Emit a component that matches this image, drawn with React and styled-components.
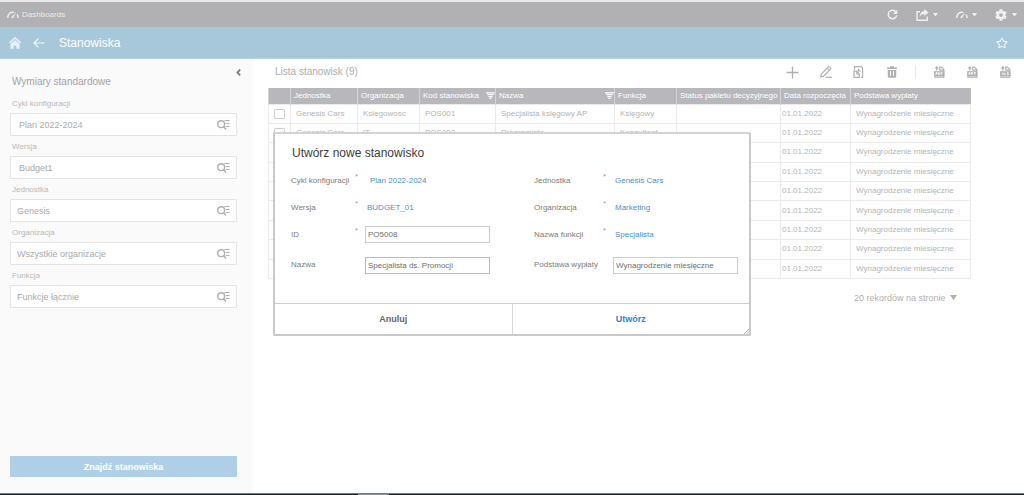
import React, { useState } from "react";
import styled, { createGlobalStyle } from "styled-components";
import { FaCog, FaRegStar } from "react-icons/fa";

const GlobalStyle = createGlobalStyle`
  * {
    box-sizing: border-box;
  }
  body {
    margin: 0;
    background-color: #fff;
    font-family: "Liberation Sans", Arial, sans-serif;
    font-size: 8px;
    color: #b4b4b4;
  }
  button, input, select {
    font-family: inherit;
    margin: 0;
  }
`;

const Page = styled.div`
  min-height: 100vh;
  display: flex;
  flex-direction: column;
  position: relative;
`;

const TopBar = styled.header`
  display: flex;
  align-items: center;
  justify-content: space-between;
  height: 27px;
  padding-left: 7px;
  padding-right: 7px;
  border-top: 2px solid #e9e9e9;
  background-color: #b1b1b3;
  color: #f0f0f2;
`;

const TopLink = styled.a`
  display: flex;
  align-items: center;
  gap: 3px;
  color: #ececee;
  text-decoration: none;
  font-size: 8px;
`;

const TopActions = styled.div`
  display: flex;
  align-items: center;
  gap: 18px;
`;

const IconButton = styled.button`
  display: flex;
  align-items: center;
  justify-content: center;
  gap: ${(props) => props.$gap || 0}px;
  width: ${(props) => (props.$width ? `${props.$width}px` : "auto")};
  border: none;
  background: none;
  padding: 0;
  color: inherit;
`;

const TitleBar = styled.div`
  display: flex;
  align-items: center;
  height: 32px;
  padding: 0 16px 0 9px;
  background-color: #a7c8db;
  color: #f4f9fc;
  border-bottom: 1px solid #b7d2e1;
`;

const NavIcons = styled.nav`
  display: flex;
  align-items: center;
  gap: 12px;
`;

const PageTitle = styled.h1`
  flex: 1;
  margin: 0 0 0 14px;
  font-size: 12px;
  font-weight: normal;
  color: #fff;
`;

const Content = styled.div`
  flex: 1;
  display: flex;
`;

const Sidebar = styled.aside`
  display: flex;
  flex-direction: column;
  width: 253px;
  flex-shrink: 0;
  padding: 10px 12px 16px 10px;
  background-color: #fafafa;
`;

const SidebarHead = styled.div`
  display: flex;
  justify-content: space-between;
  align-items: flex-start;
  height: 29px;
  padding-left: 2px;
`;

const SidebarTitle = styled.h2`
  margin: 6px 0 0;
  font-size: 10px;
  line-height: 14px;
  font-weight: normal;
  color: #a2a2a2;
`;

const Filters = styled.form`
  display: flex;
  flex-direction: column;
  flex: 1;
  gap: 5px;
  padding-right: 4px;
`;

const FilterLabel = styled.label`
  display: block;
  padding-left: 2px;
  margin-bottom: 3px;
  font-size: 8px;
  line-height: 12px;
  color: #b8b8b8;
`;

const FilterBox = styled.div`
  display: flex;
  align-items: center;
  height: 23px;
  padding-right: 6px;
  border: 1px solid #e4e4e4;
  border-radius: 1px;
  background-color: #fff;
  color: #b0b0b0;
`;

const FilterInput = styled.input`
  flex: 1;
  min-width: 0;
  border: none;
  outline: none;
  background: none;
  padding: 0 0 0 ${(props) => (props.$indent ? 8 : 6)}px;
  font-size: 9px;
  color: #a9a9a9;
`;

const FindButton = styled.button`
  height: 21px;
  margin-top: auto;
  border: none;
  border-radius: 1px;
  background-color: #aecfe5;
  color: #fff;
  font-size: 9px;
  font-weight: bold;
`;

const Main = styled.main`
  flex: 1;
  min-width: 0;
  padding-left: 15px;
`;

const ListHead = styled.div`
  display: flex;
  align-items: center;
  justify-content: space-between;
  height: 29px;
  padding: 0 2px 3px 7px;
`;

const ListTitle = styled.h2`
  margin: 0;
  font-size: 10px;
  line-height: 14px;
  font-weight: normal;
  color: #adadad;
`;

const Toolbar = styled.div`
  display: flex;
  align-items: center;
  color: #b0b0b0;
`;

const Separator = styled.span`
  width: 1px;
  height: 14px;
  margin: 0 7px;
  background-color: #e8e8e8;
`;

const TableArea = styled.div`
  padding-right: 54px;
`;

const Table = styled.table`
  width: 100%;
  height: 191px;
  table-layout: fixed;
  border-collapse: collapse;
`;

const Th = styled.th`
  height: 16px;
  padding: 0 0 0 3px;
  border-left: 1px solid #d4d4d7;
  background-color: #b8b8bc;
  color: #fff;
  font-size: 8px;
  font-weight: normal;
  text-align: left;
  white-space: nowrap;
`;

const ThContent = styled.span`
  display: flex;
  align-items: center;
  justify-content: space-between;
`;

const Td = styled.td`
  padding: 0 0 0 ${(props) => (props.$tight ? 1 : 5)}px;
  border: 1px solid #ebebeb;
  color: #b4b4b4;
  font-size: 8px;
  line-height: 10px;
  white-space: nowrap;
`;

const RowCheck = styled.input`
  appearance: none;
  display: block;
  width: 11px;
  height: 10px;
  margin: 0;
  border: 1px solid #d0d0d0;
  border-radius: 1px;
  background-color: #fff;
`;

const Pager = styled.div`
  display: flex;
  justify-content: flex-end;
  align-items: center;
  gap: 4px;
  padding: 13px 13px 0 0;
  color: #b0b0b0;
`;

const PageSize = styled.select`
  appearance: none;
  border: none;
  background: none;
  padding: 0;
  font-size: 9px;
  line-height: 12px;
  color: inherit;
`;

const Dialog = styled.section`
  position: absolute;
  top: 132px;
  left: 0;
  right: 0;
  width: 478px;
  margin: 0 auto;
  border: 2px solid #c9c9c9;
  border-top-color: #d3d3d3;
  border-radius: 2px;
  background-color: #fff;
`;

const DialogTitle = styled.h2`
  margin: 0;
  padding: 11px 0 0 17px;
  font-size: 12px;
  line-height: 16px;
  font-weight: normal;
  color: #3c3c3c;
`;

const DialogBody = styled.div`
  display: flex;
  justify-content: space-between;
  padding: 6px 11px 21px 16px;
`;

const FieldColumn = styled.div`
  display: flex;
  flex-direction: column;
`;

const Field = styled.div`
  display: grid;
  grid-template-columns: ${(props) => props.$labelWidth}px 10px 125px;
  align-items: center;
  height: ${(props) => (props.$tall ? 34 : 27)}px;
`;

const FieldLabel = styled.label`
  font-size: 8px;
  line-height: 10px;
  color: #7b7b7b;
`;

const Required = styled.span`
  align-self: start;
  padding-top: 5px;
  font-size: 8px;
  line-height: 10px;
  color: #ee7c7c;
`;

const FieldValue = styled.output`
  padding-left: ${(props) => (props.$indent ? 5 : 2)}px;
  font-size: 8px;
  line-height: 10px;
  color: #4a8fc7;
`;

const FieldInput = styled.input`
  width: 100%;
  height: 17px;
  padding: 0 2px;
  border: 1px solid ${(props) => (props.$active ? "#8ccbf0" : "#cdcdcd")};
  outline: none;
  background-color: #fff;
  font-size: 8px;
  color: #6e6e6e;
`;

const DialogFooter = styled.div`
  display: flex;
  border-top: 1px solid #cfcfcf;
`;

const DialogButton = styled.button`
  flex: 1;
  height: 30px;
  padding: 0;
  border: none;
  border-left: ${(props) => (props.$primary ? "1px solid #d9d9d9" : "none")};
  background: none;
  font-size: 9px;
  font-weight: bold;
  color: ${(props) => (props.$primary ? "#2e86c1" : "#666")};
`;

const ResizeGrip = styled.svg`
  position: absolute;
  right: 0;
  bottom: 0;
`;

const BottomStrip = styled.footer`
  height: 2px;
  border-top: 1px solid #757c80;
  background: linear-gradient(to right, #14232c 35%, #8a9297 35%, #8a9297 38%, #14232c 38%);
`;

const Gauge = () => (
  <svg width="12" height="8" viewBox="0 0 12 8" fill="none" stroke="currentColor">
    <path d="M0.9 7A5 5 0 0 1 7.2 1.4" strokeWidth="1.5" />
    <path d="M10 3.4A5 5 0 0 1 11 7" strokeWidth="1.5" />
    <path d="M4.2 6.2L9.2 1.2L6.2 7Q5 7.8 4.2 6.2Z" fill="currentColor" stroke="none" />
  </svg>
);

const Caret = ({ size = 4 }) => (
  <svg width={size} height={size * 0.75} viewBox="0 0 8 6" fill="currentColor">
    <path d="M0 0H8L4 6Z" />
  </svg>
);

const Refresh = () => (
  <svg width="11" height="11" viewBox="0 0 11 11" fill="none">
    <path d="M8.9 3A4.2 4.2 0 1 0 9.6 6.4" stroke="currentColor" strokeWidth="1.5" />
    <path d="M10.3 0.6V4.9H6Z" fill="currentColor" />
  </svg>
);

const Share = () => (
  <svg width="13" height="12" viewBox="0 0 13 12" fill="none">
    <path d="M4 2.8H1V11.2H11.2V7.6" stroke="currentColor" strokeWidth="1.4" />
    <path d="M8.2 0L12.6 3.5L8.2 7V5C6.2 5 4.8 5.8 3.8 7.8C4 4.6 5.4 2.3 8.2 2Z" fill="currentColor" />
  </svg>
);

const Home = () => (
  <svg width="12" height="12" viewBox="0 0 12 12">
    <path d="M0.5 5.8L6 1L11.5 5.8" fill="none" stroke="#eaf0fb" strokeWidth="1.6" />
    <path d="M1.4 7L6 3.2L10.6 7V11.8H7.4V8.8H4.6V11.8H1.4Z" fill="#eaf0fb" />
  </svg>
);

const Back = () => (
  <svg width="12" height="10" viewBox="0 0 12 10" fill="none" stroke="currentColor" strokeWidth="1.2">
    <path d="M11.5 5H1M5.4 0.6L1 5L5.4 9.4" />
  </svg>
);

const Collapse = () => (
  <svg width="5" height="7" viewBox="0 0 5 7" fill="none" stroke="#7c7c7c" strokeWidth="1.8">
    <path d="M4.2 0.6L1.4 3.5L4.2 6.4" />
  </svg>
);

const SearchList = () => (
  <svg width="13" height="11" viewBox="0 0 13 11" fill="none" stroke="currentColor">
    <circle cx="4.2" cy="5.2" r="3.4" strokeWidth="1.4" />
    <path d="M6.6 7.6L9 10.4" strokeWidth="1.6" />
    <path d="M7.5 1.5H12.5M8.8 4.5H12.5M8.8 7.5H12.5" strokeWidth="1.1" />
  </svg>
);

const Filter = () => (
  <svg width="9" height="7" viewBox="0 0 9 7" stroke="#fff" strokeWidth="1.2">
    <path d="M0 0.8H9M1.4 2.7H7.6M2.5 4.6H6.5M3.5 6.4H5.5" />
  </svg>
);

const Plus = () => (
  <svg width="13" height="13" viewBox="0 0 13 13" stroke="currentColor" strokeWidth="1.3">
    <path d="M6.5 0.5V12.5M0.5 6.5H12.5" />
  </svg>
);

const Pencil = () => (
  <svg width="12" height="12" viewBox="0 0 12 12" fill="none" stroke="currentColor" strokeWidth="1.2">
    <path d="M0.7 10.8L1.5 7.9L8.2 1.1Q9 0.4 9.8 1.1L10.5 1.8Q11.2 2.6 10.5 3.4L3.6 10.2Z" />
    <path d="M7.2 2.2L9.6 4.4" />
    <path d="M5.6 11.3H12" />
  </svg>
);

const Duplicate = () => (
  <svg width="11" height="12" viewBox="0 0 11 12" fill="none" stroke="currentColor" strokeWidth="1.2">
    <path d="M1.6 3.8V0.7H7.6Q9.6 0.7 9.6 2.7V11.3H8" />
    <path d="M1 5.2H3.8V8H6.3V11.3H1Z" />
    <path d="M3.8 5.2L6.3 8" />
    <path d="M5.6 2.8V4.8H7.6" />
  </svg>
);

const Trash = () => (
  <svg width="10" height="12" viewBox="0 0 10 12" fill="none">
    <path d="M0 1.4H3V0.2H7V1.4H10V3H0Z" fill="currentColor" />
    <path d="M0.8 4H9.2V10.6Q9.2 11.8 8 11.8H2Q0.8 11.8 0.8 10.6Z" fill="currentColor" />
    <path d="M3.5 5V9.8M6.5 5V9.8" stroke="#fff" strokeWidth="1" />
  </svg>
);

const exportMarks = {
  PDF: "M2 8.8V6.6H3.2V7.8H2M4.6 6.4V8.8L5.8 8.3V6.9L4.6 6.6M7.2 8.8V6.6H8.6M7.2 7.7H8.4",
  PPT: "M2 8.8V6.6H3.2V7.8H2M4.6 8.8V6.6H5.8V7.8H4.6M6.9 6.6H8.9M7.9 6.6V8.8",
  XLS: "M2 6.6L3.6 8.8M3.6 6.6L2 8.8M4.8 6.6V8.6H6M8.6 6.6H7.3V7.7H8.5V8.7H7",
};

const ExportIcon = ({ type }) => (
  <svg width="11" height="12" viewBox="0 0 11 12" fill="none">
    <path d="M0.9 5.5V11.2H9.8V3.4L7.4 1H5.8V4.2H9.8" stroke="currentColor" strokeWidth="1.2" />
    <path d="M0.3 5.2H10.4V10.2H0.3Z" fill="currentColor" />
    <path d="M2.8 0L5 2.6H3.5V4.4H2.1V2.6H0.6Z" fill="currentColor" />
    <path d={exportMarks[type]} stroke="#fff" strokeWidth="0.8" />
  </svg>
);

const filters = [
  { id: "cycle", label: "Cykl konfiguracji", value: "Plan 2022-2024", indent: true },
  { id: "version", label: "Wersja", value: "Budget1", indent: true },
  { id: "unit", label: "Jednostka", value: "Genesis" },
  { id: "organization", label: "Organizacja", value: "Wszystkie organizacje" },
  { id: "role", label: "Funkcja", value: "Funkcje łącznie" },
];

const columns = [
  { label: "", width: 22 },
  { label: "Jednostka", width: 67 },
  { label: "Organizacja", width: 62 },
  { label: "Kod stanowiska", width: 76, filter: true },
  { label: "Nazwa", width: 119, filter: true },
  { label: "Funkcja", width: 62 },
  { label: "Status pakietu decyzyjnego", width: 104 },
  { label: "Data rozpoczęcia", width: 70 },
  { label: "Podstawa wypłaty", width: 120 },
];

const positions = [
  ["Genesis Cars", "Ksiegowosc", "POS001", "Specjalista księgowy AP", "Księgowy"],
  ["Genesis Cars", "IT", "POS002", "Programista", "Konsultant"],
  [],
  [],
  [],
  [],
  [],
  [],
  [],
];

const DialogField = ({ id, label, labelWidth, required, tall, children }) => (
  <Field $labelWidth={labelWidth} $tall={tall}>
    <FieldLabel htmlFor={id}>{label}</FieldLabel>
    <Required>{required ? "*" : ""}</Required>
    {children}
  </Field>
);

const CreateDialog = () => {
  const [code, setCode] = useState("PO5008");
  const [name, setName] = useState("Specjalista ds. Promocji");
  const [basis, setBasis] = useState("Wynagrodzenie miesięczne");

  return (
    <Dialog role="dialog" aria-labelledby="dialog-title">
      <DialogTitle id="dialog-title">Utwórz nowe stanowisko</DialogTitle>
      <DialogBody>
        <FieldColumn>
          <DialogField id="new-cycle" label="Cykl konfiguracji" labelWidth={64} required>
            <FieldValue id="new-cycle" $indent>Plan 2022-2024</FieldValue>
          </DialogField>
          <DialogField id="new-version" label="Wersja" labelWidth={64} required>
            <FieldValue id="new-version">BUDGET_01</FieldValue>
          </DialogField>
          <DialogField id="new-code" label="ID" labelWidth={64} required>
            <FieldInput id="new-code" value={code} onChange={(e) => setCode(e.target.value)} />
          </DialogField>
          <DialogField id="new-name" label="Nazwa" labelWidth={64} tall>
            <FieldInput id="new-name" $active value={name} onChange={(e) => setName(e.target.value)} />
          </DialogField>
        </FieldColumn>
        <FieldColumn>
          <DialogField id="new-unit" label="Jednostka" labelWidth={69} required>
            <FieldValue id="new-unit">Genesis Cars</FieldValue>
          </DialogField>
          <DialogField id="new-organization" label="Organizacja" labelWidth={69} required>
            <FieldValue id="new-organization">Marketing</FieldValue>
          </DialogField>
          <DialogField id="new-role" label="Nazwa funkcji" labelWidth={69} required>
            <FieldValue id="new-role">Specjalista</FieldValue>
          </DialogField>
          <DialogField id="new-basis" label="Podstawa wypłaty" labelWidth={69} tall>
            <FieldInput id="new-basis" value={basis} onChange={(e) => setBasis(e.target.value)} />
          </DialogField>
        </FieldColumn>
      </DialogBody>
      <DialogFooter>
        <DialogButton type="button">Anuluj</DialogButton>
        <DialogButton type="button" $primary>Utwórz</DialogButton>
      </DialogFooter>
      <ResizeGrip width="5" height="5" viewBox="0 0 5 5" stroke="#999" strokeWidth="0.8">
        <path d="M0 5L5 0M2.5 5L5 2.5" />
      </ResizeGrip>
    </Dialog>
  );
};

const App = () => (
  <>
    <GlobalStyle />
    <Page>
      <TopBar>
        <TopLink href="#dashboards">
          <Gauge />
          Dashboards
        </TopLink>
        <TopActions>
          <IconButton aria-label="Refresh"><Refresh /></IconButton>
          <IconButton aria-label="Share" $gap={4}><Share /><Caret size={5} /></IconButton>
          <IconButton aria-label="Dashboards menu" $gap={4}><Gauge /><Caret size={5} /></IconButton>
          <IconButton aria-label="Settings" $gap={5}><FaCog size={12} /><Caret size={5} /></IconButton>
        </TopActions>
      </TopBar>
      <TitleBar>
        <NavIcons>
          <IconButton aria-label="Home"><Home /></IconButton>
          <IconButton aria-label="Back"><Back /></IconButton>
        </NavIcons>
        <PageTitle>Stanowiska</PageTitle>
        <IconButton aria-label="Favourite"><FaRegStar size={12} /></IconButton>
      </TitleBar>
      <Content>
        <Sidebar>
          <SidebarHead>
            <SidebarTitle>Wymiary standardowe</SidebarTitle>
            <IconButton aria-label="Collapse" $width={5}><Collapse /></IconButton>
          </SidebarHead>
          <Filters onSubmit={(e) => e.preventDefault()}>
            {filters.map((filter) => (
              <div key={filter.id}>
                <FilterLabel htmlFor={filter.id}>{filter.label}</FilterLabel>
                <FilterBox>
                  <FilterInput id={filter.id} defaultValue={filter.value} $indent={filter.indent} />
                  <SearchList />
                </FilterBox>
              </div>
            ))}
            <FindButton type="submit">Znajdź stanowiska</FindButton>
          </Filters>
        </Sidebar>
        <Main>
          <ListHead>
            <ListTitle>Lista stanowisk (9)</ListTitle>
            <Toolbar>
              <IconButton $width={33} aria-label="Add"><Plus /></IconButton>
              <IconButton $width={33} aria-label="Edit"><Pencil /></IconButton>
              <IconButton $width={33} aria-label="Duplicate"><Duplicate /></IconButton>
              <IconButton $width={33} aria-label="Delete"><Trash /></IconButton>
              <Separator />
              <IconButton $width={33} aria-label="Export PDF"><ExportIcon type="PDF" /></IconButton>
              <IconButton $width={33} aria-label="Export PPT"><ExportIcon type="PPT" /></IconButton>
              <IconButton $width={33} aria-label="Export XLS"><ExportIcon type="XLS" /></IconButton>
            </Toolbar>
          </ListHead>
          <TableArea>
            <Table>
              <colgroup>
                {columns.map((column) => (
                  <col key={column.label} width={column.width} />
                ))}
              </colgroup>
              <thead>
                <tr>
                  {columns.map((column) => (
                    <Th key={column.label}>
                      <ThContent>
                        {column.label}
                        {column.filter && <Filter />}
                      </ThContent>
                    </Th>
                  ))}
                </tr>
              </thead>
              <tbody>
                {positions.map(([unit, organization, code, name, role], index) => (
                  <tr key={index}>
                    <Td>
                      <RowCheck type="checkbox" aria-label={`Row ${index + 1}`} />
                    </Td>
                    <Td>{unit}</Td>
                    <Td>{organization}</Td>
                    <Td>{code}</Td>
                    <Td>{name}</Td>
                    <Td>{role}</Td>
                    <Td />
                    <Td $tight>01.01.2022</Td>
                    <Td>Wynagrodzenie miesięczne</Td>
                  </tr>
                ))}
              </tbody>
            </Table>
            <Pager>
              <PageSize aria-label="Page size">
                <option>20 rekordów na stronie</option>
              </PageSize>
              <Caret size={7} />
            </Pager>
          </TableArea>
        </Main>
      </Content>
      <BottomStrip />
      <CreateDialog />
    </Page>
  </>
);

export default App;
